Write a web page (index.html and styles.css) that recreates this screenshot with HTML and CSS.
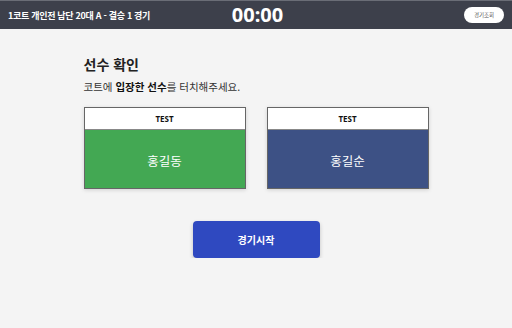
FILE: index.html
```html
<!DOCTYPE html>
<html lang="ko">
<head>
  <meta charset="UTF-8">
  <meta name="viewport" content="width=device-width, initial-scale=1.0">
  <title>선수 확인</title>
  <link rel="stylesheet" href="styles.css">
</head>
<body>

  <!-- Top Bar -->
  <div class="top-bar">
    <div class="match-title">1코트 개인전 남단 20대 A - 결승 1 경기</div>
    <div class="timer">00:00</div>
    <div class="top-actions">
      <button class="lookup-btn">경기조회</button>
    </div>
  </div>

  <div class="container">
    <h2>선수 확인</h2>
    <p class="guide">코트에 <strong>입장한 선수</strong>를 터치해주세요.</p>

    <div class="player-list">
      <div class="player-card">
        <div class="team-name">TEST</div>
        <div class="player-name green">홍길동</div>
      </div>
      <div class="player-card">
        <div class="team-name">TEST</div>
        <div class="player-name blue">홍길순</div>
      </div>
    </div>

    <div class="start-wrap">
      <button class="start-btn">경기시작</button>
    </div>
  </div>

</body>
</html>
```

FILE: styles.css
```css
body {
  font-family: "Noto Sans CJK KR", "Noto Sans", sans-serif;
  margin: 0;
  background-color: #f4f4f4;
  color: #222;
}
.top-bar {
  display: grid;
  grid-template-columns: 1fr auto 1fr;
  align-items: center;
  height: 29px;
  padding: 0 8px;
  background-color: #3d404b;
  border-top: 1px solid #6a6d76;
  box-sizing: border-box;
  color: white;
}
.match-title {
  font-size: 9px;
  font-weight: bold;
  letter-spacing: -0.3px;
}
.timer {
  font-family: "Noto Sans", sans-serif;
  font-size: 20px;
  font-weight: bold;
  line-height: 1;
  padding-left: 3px;
}
.top-actions {
  display: flex;
  justify-content: flex-end;
}
.lookup-btn {
  width: 40px;
  height: 16px;
  padding: 0;
  background-color: white;
  color: #555;
  border: none;
  border-radius: 8px;
  font-family: inherit;
  font-size: 5.5px;
  cursor: pointer;
}
.container {
  width: 345px;
  margin: 0 auto;
  padding-top: 25px;
}
h2 {
  margin: 0;
  font-size: 14px;
  font-weight: bold;
  line-height: 20px;
}
.guide {
  margin: 5px 0 0;
  font-size: 10.5px;
  line-height: 15px;
  color: #333;
}
.guide strong {
  color: #111;
}
.player-list {
  display: flex;
  justify-content: space-between;
  margin-top: 13px;
}
.player-card {
  width: 162px;
  border: 1px solid #666;
  box-sizing: border-box;
  box-shadow: 0 1px 4px rgba(0, 0, 0, 0.15);
  cursor: pointer;
}
.team-name {
  height: 21px;
  line-height: 21px;
  background-color: white;
  text-align: center;
  font-family: "Noto Sans", sans-serif;
  font-size: 8px;
  font-weight: bold;
  color: #111;
  border-bottom: 1px solid #888;
}
.player-name {
  height: 58px;
  padding-top: 3px;
  box-sizing: border-box;
  display: flex;
  align-items: center;
  justify-content: center;
  font-size: 12.5px;
  color: white;
}
.green {
  background-color: #43a853;
}
.blue {
  background-color: #3d5185;
}
.start-wrap {
  display: flex;
  justify-content: center;
  margin-top: 32px;
}
.start-btn {
  width: 127px;
  height: 37px;
  background-color: #2f49c0;
  color: white;
  border: none;
  border-radius: 4px;
  font-family: inherit;
  font-size: 10px;
  font-weight: bold;
  box-shadow: 0 2px 4px rgba(0, 0, 0, 0.2);
  cursor: pointer;
}
```
